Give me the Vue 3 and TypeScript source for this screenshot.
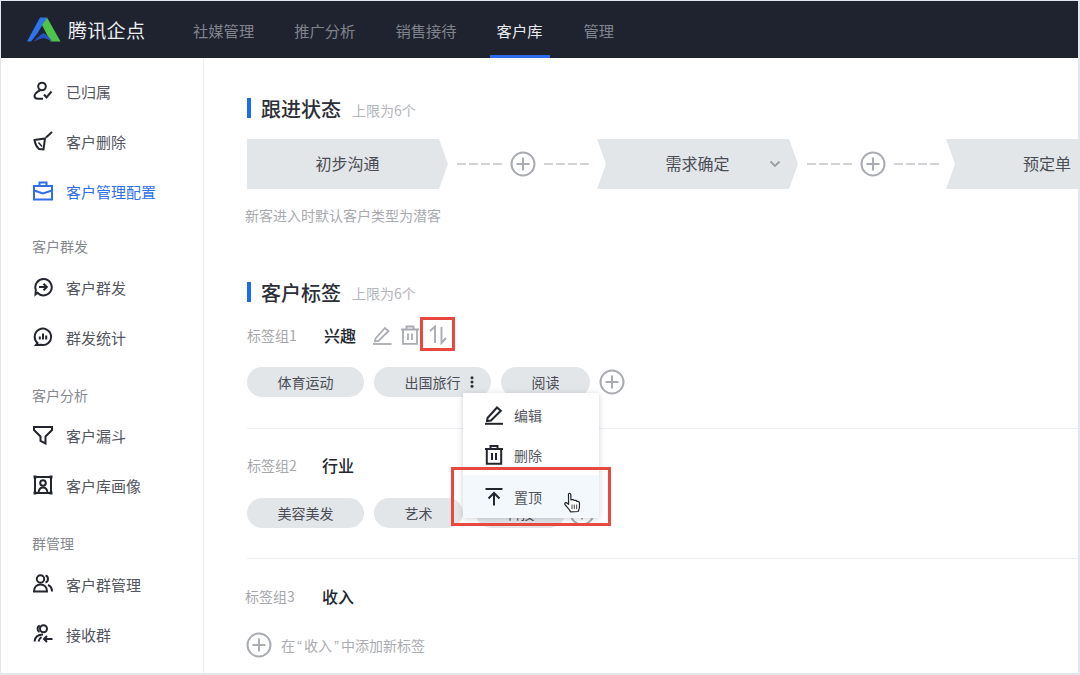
<script setup lang="ts">
interface NavItem { label: string; active?: boolean }
interface SideItem { label: string; icon: string; active?: boolean }
interface SideGroup { title?: string; items: SideItem[] }

const navItems: NavItem[] = [
  { label: "社媒管理" },
  { label: "推广分析" },
  { label: "销售接待" },
  { label: "客户库", active: true },
  { label: "管理" },
];

const sideGroups: SideGroup[] = [
  {
    items: [
      { label: "已归属", icon: "owned" },
      { label: "客户删除", icon: "broom" },
      { label: "客户管理配置", icon: "case", active: true },
    ],
  },
  {
    title: "客户群发",
    items: [
      { label: "客户群发", icon: "send" },
      { label: "群发统计", icon: "stats" },
    ],
  },
  {
    title: "客户分析",
    items: [
      { label: "客户漏斗", icon: "funnel" },
      { label: "客户库画像", icon: "portrait" },
    ],
  },
  {
    title: "群管理",
    items: [
      { label: "客户群管理", icon: "group" },
      { label: "接收群", icon: "receive" },
    ],
  },
];
</script>

<template>
  <div class="frame">
    <header class="topbar">
      <div class="brand">
        <svg class="logo" width="34" height="25" viewBox="0 0 34 25">
          <path d="M0 24.500 L13 0.500 L20 0.500 L10 17 Q6 22 4 24.500 Z" fill="#2f74ee" />
          <path d="M20 0.500 L33.500 24.500 L23.500 24.500 L15 8 Z" fill="#4fc34a" />
          <path d="M7 24.500 Q12 18 16.500 16 Q21 18 25 24.500 Q20 21.500 16.500 21 Q12 21.500 7 24.500 Z" fill="#2a4fc0" />
        </svg>
        <span class="brand-name">腾讯企点</span>
      </div>
      <nav class="nav">
        <a v-for="n in navItems" :key="n.label" class="nav-item" :class="{ on: n.active }">{{ n.label }}</a>
      </nav>
    </header>

    <div class="body">
      <aside class="side">
        <section v-for="(g, i) in sideGroups" :key="i" class="side-group">
          <h4 v-if="g.title" class="side-title">{{ g.title }}</h4>
          <div v-for="it in g.items" :key="it.label" class="side-item" :class="{ on: it.active }">
            <svg class="side-icon" width="20" height="20" viewBox="0 0 20 20" fill="none" stroke="currentColor" stroke-width="2">
              <template v-if="it.icon === 'owned'">
                <circle cx="9" cy="5.500" r="3.800" />
                <path d="M7 9.500 C3 11 1.500 14 1.500 15 C1.500 16.800 3 17.800 5 17.800 L10 17.800" />
                <path d="M11 13.500 L13.500 16.500 L18.500 10.500" />
              </template>
              <template v-else-if="it.icon === 'broom'">
                <path d="M1.500 9 L12 7.500 L10.500 18.500 L6 18 Q2.500 15 1.500 9 Z" />
                <path d="M13 6.500 L19 1" />
                <path d="M5.500 11.500 L9 15.500" stroke-width="1.500" />
              </template>
              <template v-else-if="it.icon === 'case'">
                <rect x="1" y="5" width="18" height="13.500" />
                <path d="M6.500 5 V1.500 H13.500 V5" />
                <path d="M1 9.500 L10 12.500 L19 9.500" />
              </template>
              <template v-else-if="it.icon === 'send'">
                <path d="M4.500 15.800 A8.200 8.200 0 1 0 2.800 13 L2.500 17.500 Z" />
                <path d="M6 10 H13.500 M10.500 6.800 L13.800 10 L10.500 13.200" />
              </template>
              <template v-else-if="it.icon === 'stats'">
                <path d="M4.500 16 A8.200 8.200 0 1 1 8 17.800 L3 18 Z" />
                <path d="M6.800 9.500 V12.500 M10 6.500 V12.500 M13.200 8.500 V12.500" />
              </template>
              <template v-else-if="it.icon === 'funnel'">
                <path d="M1 2 H19 V5 L12.500 11.500 V18.500 L7.500 16 V11.500 L1 5 Z" />
              </template>
              <template v-else-if="it.icon === 'portrait'">
                <rect x="2" y="2" width="16" height="16" />
                <circle cx="10" cy="8" r="2.800" />
                <path d="M5.500 17.500 C6 13.500 8 12.500 10 12.500 C12 12.500 14 13.500 14.500 17.500" />
                <path d="M0.500 0.500 H3.500 V3.500 H0.500 Z M16.500 0.500 H19.500 V3.500 H16.500 Z M0.500 16.500 H3.500 V19.500 H0.500 Z M16.500 16.500 H19.500 V19.500 H16.500 Z" fill="currentColor" stroke="none" />
              </template>
              <template v-else-if="it.icon === 'group'">
                <circle cx="7.500" cy="5" r="3.700" />
                <path d="M1 17.500 C1 13 4 10.500 7.500 10.500 C11 10.500 14 13 14 17.500 Z" />
                <path d="M12.500 1.800 C15.500 2 16 7.500 12.500 8.500 M15 11 C17.500 12 19 14.500 19 17.500" />
              </template>
              <template v-else>
                <circle cx="10.500" cy="4.800" r="3.500" />
                <path d="M6.800 1.800 C4 2.500 3.800 6.800 6.500 8 M1.500 17.500 C2 13 5 10.500 10 10.500 M5.500 17.500 C6 15 7 14 8.500 13" />
                <path d="M19.500 15 H11 M14 12 L11 15 L14 18" />
              </template>
            </svg>
            <span>{{ it.label }}</span>
          </div>
        </section>
      </aside>

      <main class="main">
        <div class="heading">
          <h3>跟进状态</h3>
          <small>上限为6个</small>
        </div>
        <div class="pipeline">
          <div class="stage first">初步沟通</div>
          <div class="link">
            <i class="dash"></i>
            <svg class="plus" width="26" height="26" viewBox="0 0 26 26" fill="none" stroke="#a9acb2" stroke-width="2">
              <circle cx="13" cy="13" r="11.500" />
              <path d="M13 6.500 V19.500 M6.500 13 H19.500" />
            </svg>
            <i class="dash"></i>
          </div>
          <div class="stage">
            需求确定
            <svg class="chev" width="12" height="8" viewBox="0 0 12 8" fill="none" stroke="#9a9da3" stroke-width="1.800">
              <path d="M1.500 1.500 L6 6 L10.500 1.500" />
            </svg>
          </div>
          <div class="link">
            <i class="dash"></i>
            <svg class="plus" width="26" height="26" viewBox="0 0 26 26" fill="none" stroke="#a9acb2" stroke-width="2">
              <circle cx="13" cy="13" r="11.500" />
              <path d="M13 6.500 V19.500 M6.500 13 H19.500" />
            </svg>
            <i class="dash"></i>
          </div>
          <div class="stage last">预定单</div>
        </div>
        <p class="note">新客进入时默认客户类型为潜客</p>

        <div class="heading second">
          <h3>客户标签</h3>
          <small>上限为6个</small>
        </div>

        <div class="group-row first-row">
          <span class="group-label">标签组1</span>
          <b class="group-name">兴趣</b>
          <svg class="tool" width="20" height="20" viewBox="0 0 20 20" fill="none" stroke="#a9acb2" stroke-width="1.800">
            <path d="M3.500 13.500 L13 3 L16.500 6 L6.500 16 L3 16.500 Z" />
            <path d="M1 19 H19.500" />
          </svg>
          <svg class="tool" width="20" height="20" viewBox="0 0 20 20" fill="none" stroke="#a9acb2" stroke-width="1.800">
            <path d="M1 4.500 H19 M6.500 4.500 V1.500 H13.500 V4.500" />
            <path d="M3 4.500 V18.800 H17 V4.500" />
            <path d="M8 8.500 V15 M12 8.500 V15" />
          </svg>
          <span class="sort-wrap">
            <svg width="20" height="20" viewBox="0 0 20 20" fill="none" stroke="#a9acb2" stroke-width="1.900">
              <path d="M8 18 V1.500 L3 6" />
              <path d="M14.500 2 V18 L19 13" />
            </svg>
            <i class="mark sort-mark"></i>
          </span>
        </div>
        <div class="chips">
          <span class="chip wide">体育运动</span>
          <span class="chip wide dots">
            出国旅行
            <svg class="more" width="4" height="12" viewBox="0 0 4 12" fill="#2d3038">
              <circle cx="2" cy="1.700" r="1.500" />
              <circle cx="2" cy="6" r="1.500" />
              <circle cx="2" cy="10.300" r="1.500" />
            </svg>
            <div class="menu">
              <div class="menu-item">
                <svg width="20" height="20" viewBox="0 0 20 20" fill="none" stroke="#23262e" stroke-width="2">
                  <path d="M3.500 13 L13 2.500 L16.800 5.800 L7 15.500 L3 16 Z" />
                  <path d="M1 18.800 H19" />
                </svg>
                <span>编辑</span>
              </div>
              <div class="menu-item">
                <svg width="20" height="20" viewBox="0 0 20 20" fill="none" stroke="#23262e" stroke-width="2">
                  <path d="M1 4 H19 M6.500 4 V1 H13.500 V4" />
                  <path d="M2.800 4 V18.800 H17.200 V4" />
                  <path d="M8 8 V15 M12 8 V15" />
                </svg>
                <span>删除</span>
              </div>
              <div class="menu-item hover">
                <svg width="20" height="20" viewBox="0 0 20 20" fill="none" stroke="#23262e" stroke-width="2">
                  <path d="M1.500 2 H18.500" />
                  <path d="M10 18.500 V6 M4.500 11.500 L10 6 L15.500 11.500" />
                </svg>
                <span>置顶</span>
                <svg class="hand" width="18" height="21" viewBox="0 0 18 21">
                  <path d="M5.500 2 C6.300 1 7.700 1.400 7.800 2.600 L8 8 L9.500 7.600 C10.300 7.400 11 7.900 11.100 8.400 L12.400 8.300 C13.200 8.300 13.700 8.800 13.800 9.300 L14.900 9.400 C16 9.600 16.500 10.500 16.500 11.500 L16.400 15.500 C16.200 17 15.700 18 15.200 19.500 L7.500 19.800 C6.800 17.800 4.500 15.500 2.300 13 C1.300 11.800 1.800 10.500 3 10.600 C3.900 10.700 4.700 11.400 5.600 12.300 Z" fill="#fff" stroke="#23262e" stroke-width="1.200" stroke-linejoin="round" />
                  <path d="M9 12.500 V17 M11.300 12.500 V17 M13.600 12.500 V17" stroke="#55585f" stroke-width="1.100" fill="none" />
                </svg>
              </div>
              <i class="mark menu-mark"></i>
            </div>
          </span>
          <span class="chip short">阅读</span>
          <svg class="plus add" width="26" height="26" viewBox="0 0 26 26" fill="none" stroke="#a9acb2" stroke-width="2">
            <circle cx="13" cy="13" r="11.500" />
            <path d="M13 6.500 V19.500 M6.500 13 H19.500" />
          </svg>
        </div>

        <hr class="rule rule-a" />

        <div class="group-row row-b">
          <span class="group-label">标签组2</span>
          <b class="group-name tight">行业</b>
        </div>
        <div class="chips chips-b">
          <span class="chip wide">美容美发</span>
          <span class="chip short">艺术</span>
          <span class="chip short">科技</span>
          <svg class="plus add" width="26" height="26" viewBox="0 0 26 26" fill="none" stroke="#a9acb2" stroke-width="2">
            <circle cx="13" cy="13" r="11.500" />
            <path d="M13 6.500 V19.500 M6.500 13 H19.500" />
          </svg>
        </div>

        <hr class="rule rule-b" />

        <div class="group-row row-c">
          <span class="group-label">标签组3</span>
          <b class="group-name tight">收入</b>
        </div>
        <div class="add-row">
          <svg class="plus" width="26" height="26" viewBox="0 0 26 26" fill="none" stroke="#a9acb2" stroke-width="2">
            <circle cx="13" cy="13" r="11.500" />
            <path d="M13 6.500 V19.500 M6.500 13 H19.500" />
          </svg>
          <span>在<span class="q">“</span>收入<span class="q">”</span>中添加新标签</span>
        </div>
      </main>
    </div>
  </div>
</template>

<style>
html, body { margin: 0; background: #fff; overflow: hidden; }
</style>

<style scoped>
.frame {
  box-sizing: border-box;
  width: 1080px;
  height: 675px;
  overflow: hidden;
  display: flex;
  flex-direction: column;
  padding: 1px 2px 2px 1px;
  background: #e3e7ef;
  font-family: "Noto Sans CJK SC", "Noto Sans", sans-serif;
  color: #4a4d55;
}
.topbar {
  flex: none;
  height: 57px;
  background: #1f2330;
  display: flex;
  align-items: center;
}
.brand { display: flex; align-items: center; margin-left: 26px; width: 166px; }
.logo { flex: none; }
.brand-name { margin-left: 7px; font-size: 19px; color: #eceef1; line-height: 1; letter-spacing: 0.3px; }
.nav { display: flex; gap: 40px; height: 100%; }
.nav-item {
  position: relative;
  display: flex;
  align-items: center;
  font-size: 15.3px;
  color: #7f838c;
}
.nav-item:last-child { margin-left: 1px; }
.nav-item.on { color: #e8e9ec; }
.nav-item.on::after {
  content: "";
  position: absolute;
  left: -7px;
  right: -7px;
  bottom: 0;
  height: 3px;
  background: #2f6be8;
}

.body { flex: 1; min-height: 0; display: flex; background: #fff; }
.side {
  flex: none;
  box-sizing: border-box;
  width: 203px;
  border-right: 1px solid #ebedf1;
  padding-top: 8px;
}
.side-group { display: flex; flex-direction: column; }
.side-title {
  margin: 23px 0 6px;
  height: 20px;
  line-height: 20px;
  padding-left: 31px;
  font-size: 14px;
  font-weight: 400;
  color: #85888f;
}
.side-group:nth-child(2) .side-title { margin-top: 20px; }
.side-group:nth-child(3) .side-title { margin-bottom: 5px; }
.side-group:last-child .side-title { margin-top: 23px; }
.side-item {
  height: 50px;
  display: flex;
  align-items: center;
  padding-left: 32px;
  font-size: 15px;
  color: #53565e;
}
.side-item.on { color: #2f6fe8; }
.side-icon { flex: none; color: #23262e; margin-right: 13px; }
.side-item.on .side-icon { color: #2f6fe8; }

.main { flex: 1; min-width: 0; padding-left: 41px; position: relative; }
.heading {
  display: flex;
  align-items: center;
  height: 20px;
  margin-top: 40px;
  margin-left: 2px;
  border-left: 4px solid #1b6cf2;
  padding-left: 10px;
}
.heading h3 { margin: 0; font-size: 20px; font-weight: 500; color: #2c2f37; line-height: 20px; position: relative; top: 1px; }
.heading small { margin-left: 11px; font-size: 14px; color: #b3b5ba; position: relative; top: 2px; }
.heading.second { margin-top: 57px; }
.heading.second small { top: 1px; }

.pipeline { display: flex; margin: 21px 0 0 2px; height: 50px; }
.stage {
  flex: none;
  box-sizing: border-box;
  width: 201px;
  height: 50px;
  padding-bottom: 2px;
  background: #e3e6e9;
  display: flex;
  align-items: center;
  justify-content: center;
  font-size: 16px;
  color: #4a4d55;
  position: relative;
  clip-path: polygon(0 0, 192px 0, 100% 50%, 192px 100%, 0 100%, 9px 50%);
}
.stage.first { clip-path: polygon(0 0, 192px 0, 100% 50%, 192px 100%, 0 100%); }
.stage.last {
  width: 140px;
  margin-left: -1px;
  justify-content: flex-end;
  padding-right: 15px;
  clip-path: polygon(0 0, 100% 0, 100% 100%, 0 100%, 9px 50%);
}
.chev { position: absolute; right: 17px; top: 21px; }
.link { flex: none; width: 149px; display: flex; align-items: center; justify-content: center; gap: 8px; }
.dash {
  display: block;
  width: 45px;
  height: 2px;
  background: repeating-linear-gradient(90deg, #d1d3d7 0 9px, transparent 9px 12px);
}
.plus { flex: none; display: block; }
.note { margin: 16px 0 0; font-size: 14px; line-height: 20px; color: #a8aaaf; }

.group-row { display: flex; align-items: center; height: 24px; margin-left: 2px; }
.first-row { margin-top: 21px; }
.group-label { width: 77px; flex: none; font-size: 14px; color: #a5a7ac; }
.group-name { font-size: 16px; font-weight: 500; color: #23262e; width: 48px; flex: none; }
.group-name.tight { margin-left: -2px; }
.tool { flex: none; margin-right: 9px; }
.tool + .tool { margin-right: 7px; margin-left: -1px; }
.sort-wrap { position: relative; display: block; width: 20px; height: 20px; }
.sort-wrap svg { display: block; }
.mark {
  position: absolute;
  box-sizing: border-box;
  border: 3px solid #e8483e;
  pointer-events: none;
}
.sort-mark { left: -7px; top: -8px; width: 35px; height: 34px; }

.chips { display: flex; align-items: center; gap: 10px; margin: 20px 0 0 2px; height: 30px; position: relative; }
.chip {
  flex: none;
  box-sizing: border-box;
  height: 30px;
  border-radius: 15px;
  background: #e3e6e9;
  display: flex;
  align-items: center;
  justify-content: center;
  font-size: 14px;
  color: #4a4d55;
  position: relative;
}
.chip.wide { width: 117px; }
.chip.short { width: 89px; }
.more { position: absolute; right: 17px; top: 9px; }
.add { margin-left: -1px; }
.chips-b { margin-top: 21px; }
.chips-b .chip.short:nth-child(3) { margin-left: 3px; }
.chips-b .add { margin-left: -6px; }

.menu {
  position: absolute;
  z-index: 3;
  left: 89px;
  top: 26px;
  width: 136px;
  height: 125px;
  box-sizing: border-box;
  padding-top: 2px;
  background: #fff;
  box-shadow: 0 1px 6px rgba(40, 50, 70, 0.22);
  display: flex;
  flex-direction: column;
}
.menu-item {
  height: 40px;
  display: flex;
  align-items: center;
  gap: 10px;
  padding-left: 21px;
  font-size: 14px;
  color: #53565e;
  position: relative;
}
.menu-item.hover { flex: 1; background: #f3f8fd; }
.hand { position: absolute; left: 100px; top: 17px; }
.menu-mark { left: -12px; top: 74px; width: 160px; height: 59px; z-index: 4; }

.rule { border: 0; height: 1px; background: #eceef2; margin: 0 0 0 2px; }
.rule-a { margin-top: 31px; }
.rule-b { margin-top: 30px; }
.row-b { margin-top: 24px; }
.row-c { margin-top: 25px; margin-left: 0; }
.row-c .group-label { width: 79px; }
.add-row {
  display: flex;
  align-items: center;
  gap: 9px;
  margin-top: 24px;
  margin-left: 1px;
  font-size: 14px;
  color: #aaacb1;
}
.q { display: inline-block; width: 9px; text-align: center; font-family: "Liberation Sans", sans-serif; }
</style>
